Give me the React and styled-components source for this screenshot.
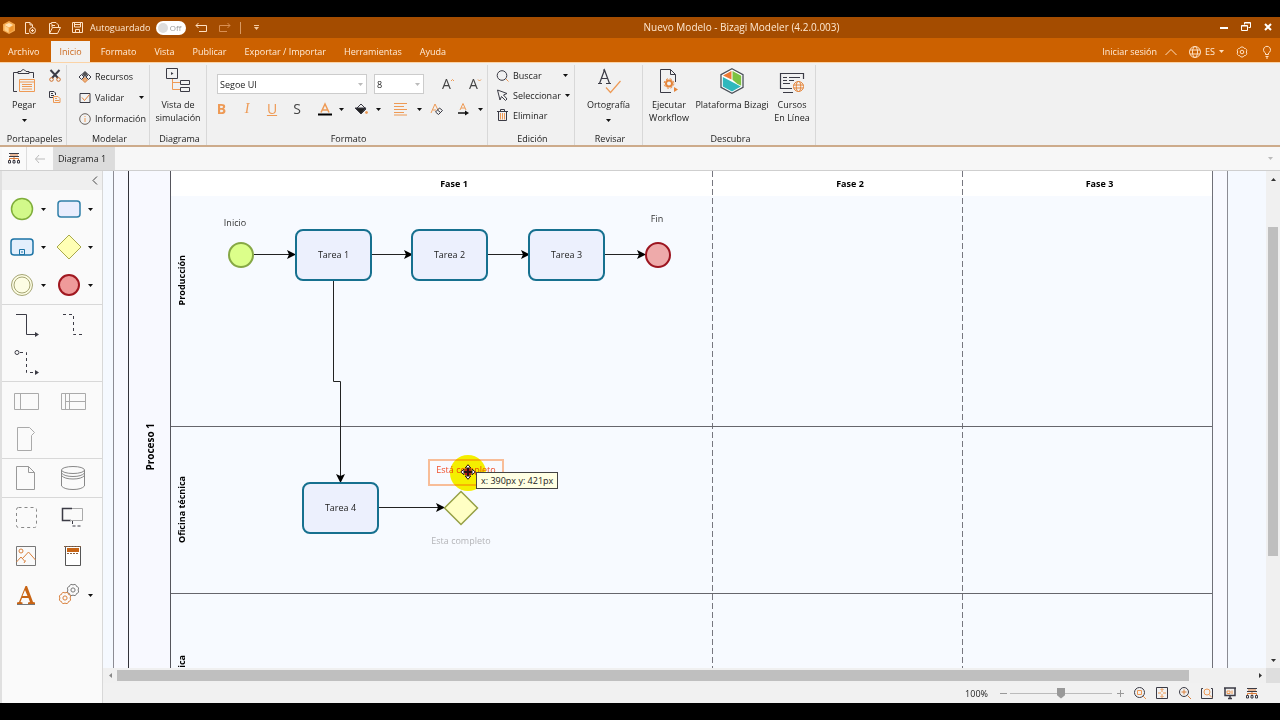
import React from "react";
import styled, { createGlobalStyle, css } from "styled-components";

const GlobalStyle = createGlobalStyle`
  * { box-sizing: border-box; }
  body { margin: 0; background: #000; font-family: "Open Sans", "Noto Sans", sans-serif; font-size: 10px; color: #222; }
  button, select, input { font: inherit; color: inherit; }
  svg { display: block; flex: none; overflow: visible; }
`;

const O = "#ee9a55";
const K = "#3b3b45";

/* ---------- shared ---------- */

const Frame = styled.div`
  height: 100vh;
  min-width: 960px;
  padding: 17px 0;
  display: flex;
  flex-direction: column;
  background: #000;
`;

const IconButton = styled.button`
  border: 0;
  padding: 0;
  background: none;
  width: ${(p) => p.$w || 24}px;
  height: ${(p) => p.$h || 20}px;
  flex: none;
  display: flex;
  align-items: center;
  justify-content: center;
`;

function Icon({ w, h, color = K, sw = 1, children }) {
  return (
    <svg width={w} height={h} viewBox={`0 0 ${w} ${h}`} fill="none" stroke={color} strokeWidth={sw} aria-hidden="true">
      {children}
    </svg>
  );
}

const Caret = ({ color = "#111", w = 5 }) => (
  <svg width={w} height="3" viewBox="0 0 5 3" fill={color} aria-hidden="true">
    <path d="M0 0h5L2.500 3z" />
  </svg>
);

/* ---------- title bar ---------- */

const TitleBar = styled.header`
  height: 21px;
  flex: none;
  display: flex;
  align-items: center;
  background: #a44c00;
  color: #ffe9d2;
`;

const QuickAccess = styled.div`
  display: flex;
  align-items: center;
  width: 270px;
`;

const Autosave = styled.label`
  display: flex;
  align-items: center;
  gap: 6px;
  font-size: 9px;
  white-space: nowrap;
`;

const Toggle = styled.span`
  position: relative;
  display: flex;
  align-items: center;
  justify-content: flex-end;
  width: 30px;
  height: 14px;
  padding-right: 5px;
  border-radius: 7px;
  background: #fff;
  color: #999;
  font-size: 8px;
  input {
    position: absolute;
    left: 2px;
    top: 2px;
    width: 10px;
    height: 10px;
    margin: 0;
    appearance: none;
    border-radius: 50%;
    background: #ddd;
  }
`;

const Divider = styled.span`
  width: 1px;
  height: 12px;
  background: #d99a63;
  margin: 0 6px;
`;

const Title = styled.h1`
  flex: 1;
  margin: 0;
  text-align: center;
  font-size: 10px;
  line-height: 14px;
  padding-bottom: 2px;
  font-weight: 400;
`;

const WindowControls = styled.div`
  display: flex;
  margin-right: 1px;
  padding-bottom: 2px;
`;

/* ---------- menu tabs ---------- */

const MenuRow = styled.nav`
  height: 24px;
  flex: none;
  display: flex;
  align-items: flex-end;
  background: #cc6100;
  color: #ffecd8;
`;

const MenuTab = styled.button`
  border: 0;
  height: 21px;
  padding: 0 ${(p) => (p.$active ? 8 : 9)}px;
  margin: ${(p) => (p.$active ? "0 2px 0 3px" : "0")};
  font-size: 9px;
  white-space: nowrap;
  background: ${(p) => (p.$active ? "#f2f1f0" : "none")};
  color: ${(p) => (p.$active ? "#cc6a20" : "#ffecd8")};
  &:first-child { padding-left: 8px; }
`;

const Account = styled.div`
  margin-left: auto;
  height: 21px;
  display: flex;
  align-items: center;
  font-size: 9px;
  a { color: inherit; text-decoration: none; }
`;

const Language = styled.button`
  display: flex;
  align-items: center;
  gap: 4px;
  border: 0;
  padding: 0;
  margin: 0 6px 0 4px;
  background: none;
`;

/* ---------- ribbon ---------- */

const Ribbon = styled.section`
  height: 85px;
  flex: none;
  display: flex;
  background: #f1f1f1;
  border-top: 1px solid #fbd3a6;
  border-bottom: 2px solid #cdab8b;
`;

const Group = styled.div`
  width: ${(p) => p.$w}px;
  flex: none;
  display: flex;
  flex-direction: column;
  margin: 2px 0 0;
  border-right: 1px solid #d8d8d8;
`;

const GroupBody = styled.div`
  flex: 1;
  min-height: 0;
  display: flex;
  justify-content: ${(p) => p.$justify || "center"};
  padding: ${(p) => p.$pad || "0"};
`;

const GroupName = styled.div`
  height: 16px;
  line-height: 19px;
  padding-left: 3px;
  text-align: center;
  font-size: 9px;
`;

const BigButton = styled.button`
  border: 0;
  padding: 3px 0 0;
  background: none;
  width: ${(p) => p.$w}px;
  display: flex;
  flex-direction: column;
  align-items: center;
  font-size: 9px;
  line-height: 13px;
  white-space: nowrap;
  svg + span { margin-top: 4px; }
  span + svg { margin-top: 8px; }
`;

const Stack = styled.div`
  display: flex;
  flex-direction: column;
`;

const RowButton = styled.button`
  border: 0;
  padding: 0;
  background: none;
  height: ${(p) => p.$h}px;
  width: ${(p) => p.$w}px;
  display: flex;
  align-items: center;
  gap: 4px;
  font-size: 9px;
  white-space: nowrap;
  > svg + svg { margin-left: auto; }
`;

const FontRow = styled.div`
  display: flex;
  align-items: center;
  height: 20px;
`;

const SelectBox = styled.label`
  position: relative;
  display: block;
  width: ${(p) => p.$w}px;
  margin-right: 7px;
  select {
    appearance: none;
    width: 100%;
    height: 20px;
    padding: 0 2px;
    border: 1px solid #ccc;
    border-radius: 0;
    background: #fff;
    font-size: 9px;
    display: block;
  }
  svg { position: absolute; right: 4px; top: 9px; }
`;

const FormatRow = styled.div`
  display: flex;
  align-items: center;
  height: 24px;
  margin-top: 3px;
`;

const Letter = styled.span`
  font-size: 14px;
  line-height: 16px;
  font-family: ${(p) => (p.$serif ? '"Liberation Serif", serif' : '"Open Sans", sans-serif')};
  color: ${(p) => p.$c || "#ee9a55"};
  font-weight: ${(p) => (p.$bold ? 700 : 400)};
  font-style: ${(p) => (p.$italic ? "italic" : "normal")};
  text-decoration: ${(p) => p.$deco || "none"};
`;

/* ---------- document tabs ---------- */

const DocTabs = styled.div`
  height: 24px;
  flex: none;
  display: flex;
  align-items: stretch;
  padding-left: 2px;
  background: #f7f7f7;
  border-bottom: 1px solid #cfcfcf;
`;

const DocButton = styled.button`
  border: 0;
  border-right: 1px solid #ddd;
  background: ${(p) => (p.$active ? "#dcdcdc" : "#fafafa")};
  width: ${(p) => p.$w}px;
  padding: ${(p) => (p.$active ? "0 0 0 4px" : "0")};
  display: flex;
  align-items: center;
  justify-content: ${(p) => (p.$active ? "flex-start" : "center")};
  font-size: 9px;
`;

const DocMenu = styled.button`
  margin-left: auto;
  border: 0;
  padding: 0 6px 0 0;
  background: none;
`;

/* ---------- workspace ---------- */

const Workspace = styled.main`
  flex: 1;
  min-height: 0;
  display: flex;
`;

const Palette = styled.aside`
  width: 103px;
  flex: none;
  background: #fafafa;
  border-left: 2px solid #e0e0e0;
  border-right: 1px solid #d8d8d8;
`;

const PaletteHead = styled.div`
  height: 19px;
  display: flex;
  justify-content: flex-end;
  background: #efefef;
`;

const PaletteSection = styled.div`
  display: grid;
  grid-template-columns: 47px 47px;
  grid-auto-rows: 38px;
  row-gap: ${(p) => p.$gap || 0}px;
  padding-left: 1px;
  & + & { border-top: 1px solid #d8d8d8; }
`;

const Tool = styled.button`
  border: 0;
  padding: 0 4px 0 ${(p) => (p.$menu ? 6 : 10)}px;
  background: none;
  display: flex;
  align-items: center;
  justify-content: flex-start;
  > svg + svg { margin-left: auto; }
`;

const CanvasArea = styled.div`
  flex: 1;
  min-width: 0;
  display: grid;
  grid-template-columns: 1fr 14px;
  grid-template-rows: 1fr 15px 20px;
`;

const Canvas = styled.div`
  position: relative;
  overflow: hidden;
  display: flex;
  background: #f5f9ff;
  padding: 0 38px 0 10px;
`;

const Sheet = styled.div`
  flex: 1;
  display: flex;
  padding: 0 14px;
  border-left: 1px solid #8c8c94;
  border-right: 1px solid #8c8c94;
  background: #f8f9ff;
`;

const Pool = styled.div`
  flex: 1;
  display: flex;
  border-left: 1px solid #33333a;
  border-right: 1px solid #707078;
`;

const Vertical = styled.span`
  writing-mode: vertical-rl;
  transform: rotate(180deg);
  white-space: nowrap;
  color: #000;
  font-weight: 700;
  font-size: ${(p) => p.$size}px;
  line-height: 14px;
`;

const PoolTitle = styled.div`
  width: 42px;
  flex: none;
  display: flex;
  justify-content: center;
  align-items: center;
  padding-top: 54px;
  border-right: 1px solid #55555c;
`;

const PoolBody = styled.div`
  position: relative;
  flex: 1;
  display: flex;
  flex-direction: column;
`;

const Phases = styled.div`
  position: absolute;
  inset: 0;
  display: grid;
  grid-template-columns: 542fr 250fr 249fr;
`;

const Phase = styled.div`
  text-align: center;
  font-size: 9px;
  font-weight: 700;
  color: #000;
  line-height: 25px;
  padding-left: 24px;
  background:
    ${(p) => (p.$last ? "" : "repeating-linear-gradient(to bottom, #77777f 0 6px, transparent 6px 9px) right top / 1px 100% no-repeat,")}
    linear-gradient(#fff, #fff) left top / 100% 25px no-repeat,
    #f7faff;
`;

const Lane = styled.div`
  position: relative;
  flex: ${(p) => (p.$h ? `0 0 ${p.$h}px` : "1")};
  min-height: 0;
  overflow: hidden;
  display: flex;
  align-items: ${(p) => (p.$start ? "flex-start" : "center")};
  padding: ${(p) => p.$pad || "0"};
  border-bottom: ${(p) => (p.$h ? "1px solid #66666c" : "0")};
`;

const at = css`
  position: absolute;
  left: ${(p) => p.$x}px;
  top: ${(p) => p.$y}px;
`;

const Connectors = styled.svg`
  position: absolute;
  left: 0;
  top: 0;
`;

const Task = styled.div`
  ${at}
  width: 77px;
  height: 52px;
  display: flex;
  align-items: center;
  justify-content: center;
  padding-bottom: 2px;
  border: 2px solid #16708f;
  border-radius: 8px;
  background: #ecf0fd;
  font-size: 9px;
`;

const EventNode = styled.div`
  ${at}
  width: 26px;
  height: 26px;
  border-radius: 50%;
  border: 2px solid ${(p) => p.$line};
  background: ${(p) => p.$fill};
`;

const Caption = styled.div`
  ${at}
  width: 76px;
  text-align: center;
  font-size: 9px;
  line-height: 13px;
  white-space: nowrap;
  color: ${(p) => p.$c || "#333"};
`;

const DragGhost = styled(Caption)`
  height: 27px;
  padding-top: 2px;
  border: 2px solid #f8bd98;
  color: #f0502c;
`;

const Highlight = styled.div`
  ${at}
  width: 36px;
  height: 36px;
  border-radius: 50%;
  background: #fcf400;
  mix-blend-mode: multiply;
`;

const Drawing = styled.div`
  ${at}
`;

const Tooltip = styled.div`
  ${at}
  height: 17px;
  padding: 0 4px;
  border: 1px solid #444;
  background: #ffffe3;
  font-size: 9px;
  line-height: 15px;
  white-space: nowrap;
`;

const VScroll = styled.div`
  display: flex;
  flex-direction: column;
  align-items: center;
  padding: 7px 0 6px;
  background: #f0f0f0;
`;

const HScroll = styled.div`
  display: flex;
  align-items: center;
  padding: 0 4px 0 6px;
  background: #f0f0f0;
`;

const ThumbV = styled.div`
  width: 10px;
  height: 68%;
  margin: 46px 0 auto;
  background: #bfbfbf;
`;

const ThumbH = styled.div`
  width: 93%;
  height: 11px;
  margin: 0 auto 0 5px;
  background: #bfbfbf;
`;

const Corner = styled.div`
  background: #dedede;
`;

const StatusBar = styled.footer`
  grid-column: 1 / -1;
  display: flex;
  align-items: center;
  justify-content: flex-end;
  padding-right: 20px;
  background: #f1f1f1;
  font-size: 9px;
`;

const ZoomLabel = styled.label`
  display: flex;
  align-items: center;
  gap: 9px;
`;

const ZoomRange = styled.input`
  appearance: none;
  width: 102px;
  height: 12px;
  margin: 0 3px 0 0;
  background: linear-gradient(#bbb, #bbb) center / 100% 1px no-repeat;
  &::-webkit-slider-thumb {
    appearance: none;
    width: 8px;
    height: 11px;
    background: #999;
    clip-path: polygon(0 0, 100% 0, 100% 70%, 50% 100%, 0 70%);
  }
`;

/* ---------- drawings ---------- */

const Logo = () => (
  <svg width="12" height="13" viewBox="0 0 12 13">
    <path d="M6 0l6 3.2v6.600L6 13 0 9.800V3.200z" fill="#f5a94e" />
    <path d="M1.500 4L6 2l4 2-4 2.500z" fill="#ffe2b4" />
    <path d="M1.500 4.500L5.600 7v4.500L1.500 9.300z" fill="#ffd08a" />
    <path d="M10.500 4.500L6.400 7v4.500l4.100-2.200z" fill="#f0962f" />
  </svg>
);

const HierarchyIcon = () => (
  <svg width="12" height="11" viewBox="0 0 12 11" fill="none" stroke={K}>
    <path d="M1 .5h10M1 3.500h10" />
    <path d="M2 2h8" stroke="#d97b3a" />
    <path d="M6 4v3M1.500 7V5.500h9V7" stroke="#d97b3a" />
    <path d="M.5 7.500h2v2.500h-2zM5 7.500h2v2.500H5zM9.500 7.500h2v2.500h-2z" />
  </svg>
);

const Gear = ({ cx, cy, r, color, n = 8, k = 0.42 }) => {
  const p = (i) => {
    const t = (i / n) * Math.PI * 2;
    return `${(cx + r * Math.cos(t)).toFixed(2)} ${(cy + r * Math.sin(t)).toFixed(2)}`;
  };
  let d = `M${p(0)}`;
  for (let i = 1; i <= n; i++) d += `A${r * k} ${r * k} 0 0 1 ${p(i)}`;
  return (
    <g fill="none" stroke={color}>
      <path d={d + "z"} />
      <circle cx={cx} cy={cy} r={r * 0.42} />
    </g>
  );
};

const Arrow = ({ x, y, down }) => (
  <path d="M0 0L-9-4.500L-7 0L-9 4.500z" fill="#000" stroke="none" transform={`translate(${x} ${y})${down ? " rotate(90)" : ""}`} />
);

/* ---------- sections ---------- */

function TopBar() {
  return (
    <TitleBar>
      <QuickAccess>
        <IconButton $w={18} aria-label="Bizagi"><Logo /></IconButton>
        <IconButton aria-label="Nuevo">
          <Icon w={12} h={12} color="#ffe1c4">
            <path d="M5 11.500H1.500V.5H6l2.500 2.500v2M6 .5V3h2.500" />
            <circle cx="8.500" cy="8.500" r="3" /><path d="M7 8.500h3M8.500 7v3" />
          </Icon>
        </IconButton>
        <IconButton aria-label="Abrir">
          <Icon w={13} h={12} color="#ffe1c4">
            <path d="M1.500 11.500V1.500h2V.5H8L10.500 3v2M1.500 11.500l3-6h8l-3 6zM4 3.500h3M4 5.500V2" />
          </Icon>
        </IconButton>
        <IconButton aria-label="Guardar">
          <Icon w={12} h={12} color="#ffe1c4"><path d="M.5.5h10v10H.5zM2.500.5v4.500h6V.5M3.500 10.500V7.500h4v3M2.500 2.500h6" /></Icon>
        </IconButton>
        <Autosave>
          Autoguardado
          <Toggle><input type="checkbox" />Off</Toggle>
        </Autosave>
        <IconButton $w={30} aria-label="Deshacer">
          <Icon w={12} h={9} color="#ffe1c4"><path d="M3.500 0L1 2.500l2.500 2.500M1 2.500h10.500v6H4" /></Icon>
        </IconButton>
        <IconButton $w={18} aria-label="Rehacer">
          <Icon w={12} h={9} color="#d98f52"><path d="M8.500 0L11 2.500L8.500 5M11 2.500H.5v6H8" /></Icon>
        </IconButton>
        <Divider />
        <IconButton $w={18} aria-label="Personalizar">
          <Icon w={5} h={5} color="#f3cba4"><path d="M0 .5h5" /><path d="M0 2h5L2.500 5z" fill="#f3cba4" stroke="none" /></Icon>
        </IconButton>
      </QuickAccess>
      <Title>Nuevo Modelo - Bizagi Modeler (4.2.0.003)</Title>
      <WindowControls>
        <IconButton $w={22} aria-label="Minimizar"><Icon w={8} h={8} color="#fff" sw={2}><path d="M0 5h8" /></Icon></IconButton>
        <IconButton $w={22} aria-label="Restaurar"><Icon w={10} h={9} color="#fff"><path d="M3.500 2.500v-2h6v5h-2M.5 3.500h6v5h-6zM.5 4h6M3.500 1h6" /></Icon></IconButton>
        <IconButton $w={22} aria-label="Cerrar"><Icon w={8} h={8} color="#fff" sw={2}><path d="M1 1l6 6M7 1L1 7" /></Icon></IconButton>
      </WindowControls>
    </TitleBar>
  );
}

const MENUS = ["Archivo", "Inicio", "Formato", "Vista", "Publicar", "Exportar / Importar", "Herramientas", "Ayuda"];

function Menu() {
  return (
    <MenuRow>
      {MENUS.map((m) => <MenuTab key={m} $active={m === "Inicio"}>{m}</MenuTab>)}
      <Account>
        <a href="#sesion">Iniciar sesión</a>
        <IconButton $w={28} aria-label="Contraer"><Icon w={12} h={6} color="#ffdfc0"><path d="M.5 6L6 .5 11.500 6" /></Icon></IconButton>
        <Language>
          <Icon w={12} h={12} color="#ffe1c4"><circle cx="6" cy="6" r="5.500" /><ellipse cx="6" cy="6" rx="2.500" ry="5.500" /><path d="M1 4h10M1 8h10" /></Icon>
          ES <Caret color="#ffdfc0" />
        </Language>
        <IconButton $w={24} aria-label="Opciones">
          <svg width="12" height="12"><Gear cx={6} cy={6} r={4.3} n={6} k={0.55} color="#ffe1c4" /></svg>
        </IconButton>
        <IconButton $w={26} aria-label="Sugerencias"><Icon w={8} h={12} color="#ffe1c4"><path d="M2.500 8.500V7A3.500 3.500 0 1 1 5.500 7v1.500zM2.500 10.500h3M3 12h2" /></Icon></IconButton>
      </Account>
    </MenuRow>
  );
}

function RibbonBar() {
  return (
    <Ribbon>
      <Group $w={67}>
        <GroupBody $justify="flex-start" $pad="0 0 0 4px">
          <BigButton $w={40}>
            <Icon w={24} h={26}>
              <path d="M5 23.500H1.500V4.500H6M17 4.500h4.500V10M6 5.500v-2h3q2-4 5 0h3v2z" />
              <path d="M7.500 11.500h15v12h-15zM7.500 14h15M10 16.500h10M10 18.500h10M10 21h10" stroke={O} />
            </Icon>
            <span>Pegar</span>
            <Caret />
          </BigButton>
          <Stack>
            <IconButton $w={22} $h={22} aria-label="Cortar">
              <Icon w={12} h={12}><path d="M1.500 0L9 8M10.500 0L3 8" strokeWidth="2" /><circle cx="2.500" cy="9.500" r="1.800" stroke="#cf6f2a" /><circle cx="9.500" cy="9.500" r="1.800" stroke="#cf6f2a" /></Icon>
            </IconButton>
            <IconButton $w={22} $h={20} aria-label="Copiar">
              <Icon w={12} h={12}><path d="M4 6.500H.5v-6h4.500l1.500 1.500V4M2 2.500h2M2 4.500h3" /><path d="M4.500 5.500h4.500l2 2v4h-6.500zM6 7.500h2M6 9.500h4" stroke={O} /></Icon>
            </IconButton>
          </Stack>
        </GroupBody>
        <GroupName>Portapapeles</GroupName>
      </Group>

      <Group $w={83}>
        <GroupBody $justify="flex-start" $pad="1px 0 0 12px">
          <Stack>
            <RowButton $h={21} $w={66}>
              <Icon w={12} h={12}><path d="M6 .5l2.500 2.500L6 5.500 3.500 3z" fill="#555" /><path d="M2.500 3.500L5 6 2.500 8.500 0 6zM9.500 3.500L12 6 9.500 8.500 7 6z" /><path d="M6 6.500l2.500 2.500L6 11.500 3.500 9z" stroke="#d9803c" fill="#efb27e" /></Icon>
              Recursos
            </RowButton>
            <RowButton $h={21} $w={65}>
              <Icon w={12} h={12}><path d="M1 1.500h10v9H1z" /><path d="M3 5.500l2.500 3 5-6" stroke="#e5853a" /></Icon>
              Validar
              <Caret />
            </RowButton>
            <RowButton $h={21} $w={68}>
              <Icon w={12} h={12} color="#6b6460"><circle cx="6" cy="6" r="5.300" /><path d="M6 5v4M6 3v1" stroke={O} /></Icon>
              Información
            </RowButton>
          </Stack>
        </GroupBody>
        <GroupName>Modelar</GroupName>
      </Group>

      <Group $w={57}>
        <GroupBody>
          <BigButton $w={55}>
            <Icon w={24} h={26}>
              <path d="M.5.5h11v10H.5z" /><path d="M5 4v3l2.500-1.500z" fill={K} stroke="none" />
              <path d="M6.500 11v10.500H14M6.500 14.500H14" stroke={O} />
              <path d="M14.500 12.500h9v4h-9zM14.500 19.500h9v4h-9z" />
            </Icon>
            <span>Vista de<br />simulación</span>
          </BigButton>
        </GroupBody>
        <GroupName>Diagrama</GroupName>
      </Group>

      <Group $w={281}>
        <GroupBody $justify="flex-start" $pad="9px 0 0 10px">
          <Stack>
            <FontRow>
              <SelectBox $w={150}>
                <select aria-label="Fuente"><option>Segoe UI</option></select>
                <Caret color="#bbb" />
              </SelectBox>
              <SelectBox $w={50}>
                <select aria-label="Tamaño"><option>8</option></select>
                <Caret color="#bbb" />
              </SelectBox>
              <IconButton $w={34} aria-label="Aumentar fuente">
                <Letter $c="#444">A</Letter><Icon w={3} h={10} color={O}><path d="M0 2l1.500-1.500L3 2" /></Icon>
              </IconButton>
              <IconButton $w={20} aria-label="Reducir fuente">
                <Letter $c="#444">A</Letter><Icon w={3} h={10} color={O}><path d="M0 .5l1.500 1.500L3 .5" /></Icon>
              </IconButton>
            </FontRow>
            <FormatRow>
              <IconButton $w={9} aria-label="Negrita"><Letter $bold>B</Letter></IconButton>
              <IconButton $w={42} aria-label="Cursiva"><Letter $serif $italic>I</Letter></IconButton>
              <IconButton $w={8} aria-label="Subrayado"><Letter $deco="underline">U</Letter></IconButton>
              <IconButton $w={42} aria-label="Tachado"><Letter $c="#444">S</Letter></IconButton>
              <IconButton $w={14} aria-label="Color de fuente"><Icon w={14} h={13}><path d="M3 9.500L7 1l4 8.500M4.500 7h5" stroke={O} strokeWidth="1.500" /><path d="M0 11.500h14" stroke="#000" strokeWidth="2" /></Icon></IconButton>
              <IconButton $w={18} aria-label="Más colores"><Caret /></IconButton>
              <IconButton $w={22} aria-label="Relleno"><Icon w={13} h={12}><path d="M6 1l5 5-5 5-5-5z" /><path d="M0 5h11L6 11z" fill="#222" /><circle cx="11.500" cy="9.500" r="1" fill={O} stroke={O} /></Icon></IconButton>
              <IconButton $w={12} aria-label="Más rellenos"><Caret /></IconButton>
              <IconButton $w={32} aria-label="Alineación"><Icon w={13} h={12} color={O}><path d="M0 .5h13M0 3.500h10M0 6.500h13M0 9.500h10M0 12h13" /></Icon></IconButton>
              <IconButton $w={6} aria-label="Más alineaciones"><Caret /></IconButton>
              <IconButton $w={30} aria-label="Borrar formato"><Icon w={12} h={12}><path d="M0 10L4 1l3 6M2 7h3" stroke={O} /><path d="M4.500 9l4-4 3 2.500-4 4zM6.500 7l3 2.500" /></Icon></IconButton>
              <IconButton $w={22} aria-label="Orientación"><Icon w={11} h={12}><path d="M2 7l3-6.500L8 7M3 5h4" stroke={O} /><path d="M0 10h8" stroke="#111" strokeWidth="1.500" /><path d="M7 7.500l4 2.500-4 2.500z" fill="#111" stroke="none" /></Icon></IconButton>
              <IconButton $w={12} aria-label="Más orientaciones"><Caret /></IconButton>
            </FormatRow>
          </Stack>
        </GroupBody>
        <GroupName>Formato</GroupName>
      </Group>

      <Group $w={87}>
        <GroupBody $justify="flex-start" $pad="1px 0 0 8px">
          <Stack>
            <RowButton $h={19} $w={72}>
              <Icon w={13} h={12}><circle cx="6" cy="5.500" r="4.800" /><path d="M10 9l2.500 2.500" stroke={O} /></Icon>
              Buscar <Caret />
            </RowButton>
            <RowButton $h={20} $w={72}>
              <Icon w={13} h={12}><path d="M1.500 1l9.500 3.500-3.500 1.500 3.500 4-1.500 1.500-4-4L4 11z" /></Icon>
              Seleccionar <Caret />
            </RowButton>
            <RowButton $h={20} $w={72}>
              <Icon w={13} h={12}><path d="M1 2.500h11M4.500 2V.5h4V2M2.500 3v8.500h8V3" /><path d="M4.500 4v6.500M6.500 4v6.500M8.500 4v6.500" stroke={O} /></Icon>
              Eliminar
            </RowButton>
          </Stack>
        </GroupBody>
        <GroupName>Edición</GroupName>
      </Group>

      <Group $w={68}>
        <GroupBody>
          <BigButton $w={60}>
            <Icon w={24} h={26}>
              <path d="M1 15.500h4M9 15.500h5M2.500 15.500L7.500 2l5 13.500M4.500 10.500h6.500M6 2h2" strokeWidth="1.200" />
              <path d="M9 19.500l4.500 5L23.500 13" stroke={O} strokeWidth="1.200" />
            </Icon>
            <span>Ortografía</span>
            <Caret />
          </BigButton>
        </GroupBody>
        <GroupName>Revisar</GroupName>
      </Group>

      <Group $w={173}>
        <GroupBody $justify="flex-start" $pad="0 0 0 4px">
          <BigButton $w={44}>
            <Icon w={20} h={26}>
              <path d="M12 24.500H1.500V1.500h10l5 5V14M11.500 1.500v5h5" />
              <circle cx="10" cy="15.500" r="3" stroke="#e5853a" strokeWidth="2" /><circle cx="10" cy="15.500" r="4.800" stroke="#e5853a" strokeDasharray="2 1.800" />
              <path d="M15 19v5l4-2.500z" fill="#e5853a" stroke="none" />
            </Icon>
            <span>Ejecutar<br />Workflow</span>
          </BigButton>
          <BigButton $w={82}>
            <svg width="24" height="26" viewBox="0 0 24 26">
              <path d="M12 .7l11 6v12.600l-11 6-11-6V6.700z" fill="#fff" stroke="#4a5058" strokeWidth="1.300" />
              <path d="M11.500 3v8.500L3 7.500z" fill="#ee7a35" />
              <path d="M12.500 3l8.700 4.700v10l-4-2-4.700-4z" fill="#7dc242" />
              <path d="M2.800 9l18 9.500L12 23.500l-9.200-5z" fill="#2fb8bd" />
            </svg>
            <span>Plataforma Bizagi</span>
          </BigButton>
          <BigButton $w={38}>
            <Icon w={24} h={26}>
              <path d="M12 20.500H.5v-15h23V11M3 24.500h10" strokeWidth="1.200" /><path d="M3 9.500h4M9 9.500h11M3 12.500h4M9 12.500h5M3 15.500h7" />
              <g stroke="#e5853a"><circle cx="18.500" cy="18.500" r="5" /><ellipse cx="18.500" cy="18.500" rx="2.200" ry="5" /><path d="M13.500 17h10M13.500 20h10" /></g>
            </Icon>
            <span>Cursos<br />En Línea</span>
          </BigButton>
        </GroupBody>
        <GroupName>Descubra</GroupName>
      </Group>
    </Ribbon>
  );
}

function ToolPalette() {
  return (
    <Palette>
      <PaletteHead><IconButton $w={14} $h={19} aria-label="Contraer paleta"><Icon w={6} h={9} color="#444"><path d="M5 .5l-4 4 4 4" /></Icon></IconButton></PaletteHead>
      <PaletteSection>
        <Tool $menu aria-label="Evento de inicio"><Icon w={26} h={26} color="#7fae3a"><circle cx="13" cy="13" r="10.500" fill="#d2f98a" strokeWidth="1.500" /></Icon><Caret /></Tool>
        <Tool $menu aria-label="Tarea"><Icon w={26} h={26} color="#2f7fa8" sw={1.5}><rect x="2" y="5" width="22" height="16" rx="3" fill="#e9edfd" /></Icon><Caret /></Tool>
        <Tool $menu aria-label="Subproceso"><Icon w={26} h={26} color="#1b73a5" sw={1.5}><rect x="2" y="5" width="22" height="16" rx="3" fill="#e3effc" /><path d="M10.500 15.500h5v5h-5zM12 18h2" strokeWidth="1" /></Icon><Caret /></Tool>
        <Tool $menu aria-label="Compuerta"><Icon w={26} h={26} color="#a9a94c"><path d="M13 1l12 12-12 12L1 13z" fill="#ffffb5" /></Icon><Caret /></Tool>
        <Tool $menu aria-label="Evento intermedio"><Icon w={26} h={26} color="#a5a574"><circle cx="13" cy="13" r="10.500" fill="#fdfde4" /><circle cx="13" cy="13" r="8" /></Icon><Caret /></Tool>
        <Tool $menu aria-label="Evento de fin"><Icon w={26} h={26} color="#a01820" sw={2}><circle cx="13" cy="13" r="10" fill="#ef9a9a" /></Icon><Caret /></Tool>
      </PaletteSection>
      <PaletteSection>
        <Tool aria-label="Flujo de secuencia"><Icon w={28} h={26}><path d="M3 3.500h10.500v20H24" /><path d="M22 21l4 2.500-4 2.500z" fill={K} stroke="none" /></Icon></Tool>
        <Tool aria-label="Asociación"><Icon w={28} h={26}><path d="M3 3.500h10.500v20H25" strokeDasharray="3 3" /></Icon></Tool>
        <Tool aria-label="Flujo de mensaje"><Icon w={28} h={26}><circle cx="4" cy="3.500" r="2" /><path d="M7 3.500h6.500v20H23" strokeDasharray="3 3" /><path d="M22 21l4 2.500-4 2.500z" fill={K} stroke="none" /></Icon></Tool>
      </PaletteSection>
      <PaletteSection>
        <Tool aria-label="Proceso"><Icon w={26} h={20} color="#aaa"><path d="M1.500 2.500h24v16h-24zM7.500 2.500v16" /></Icon></Tool>
        <Tool aria-label="Carril"><Icon w={26} h={20} color="#aaa"><path d="M1.500 2.500h24v16h-24zM5.500 2.500v16M9.500 2.500v16M5.500 10.500h20" /></Icon></Tool>
        <Tool aria-label="Fase"><Icon w={26} h={26} color="#aaa"><path d="M4.500 1.500h12l5 5-3 3v15h-14z" /></Icon></Tool>
      </PaletteSection>
      <PaletteSection>
        <Tool aria-label="Objeto de datos"><Icon w={26} h={26} color="#999"><path d="M3.500 1.500h12l6 6v17h-18zM15.500 1.500v6h6" /></Icon></Tool>
        <Tool aria-label="Depósito de datos"><Icon w={26} h={26} color="#888"><ellipse cx="13" cy="5" rx="11.500" ry="3.500" /><path d="M1.500 5v16q3 3.500 11.500 3.500t11.500-3.500V5M1.500 8q3 3.500 11.500 3.500T24.500 8M1.500 10.500q3 3.500 11.500 3.500t11.500-3.500" /></Icon></Tool>
      </PaletteSection>
      <PaletteSection $gap={1}>
        <Tool aria-label="Grupo"><Icon w={26} h={26} color="#888"><rect x="3.500" y="3.500" width="20" height="20" rx="2" strokeDasharray="3 3" /></Icon></Tool>
        <Tool aria-label="Anotación"><Icon w={26} h={26}><path d="M11 16.500H2.500v-12H12" strokeWidth="1.500" /><path d="M12 4.500h10.500v12H10" stroke="#aaa" /><path d="M12.500 17v5H21" strokeDasharray="3 2" /></Icon></Tool>
        <Tool aria-label="Imagen"><Icon w={26} h={26} color="#777"><path d="M3.500 3.500h19v19h-19z" /><path d="M3.500 19l4.500-5 4 4.500M9 16l6.500-7 7 8M11 20l1.500-2.500" stroke="#d9803c" /><circle cx="8" cy="8" r="2" stroke="#d9803c" /></Icon></Tool>
        <Tool aria-label="Encabezado"><Icon w={26} h={26} color="#555"><path d="M5.500 3.500h15v19h-15z" fill="#fff" /><path d="M7 5h12v4H7z" fill="#c86414" stroke="none" /><path d="M4 3.500h18M7 10.500h12" strokeDasharray="2 1" stroke="#8a6244" /></Icon></Tool>
        <Tool aria-label="Texto con formato"><Icon w={26} h={26}><path d="M4 22v-1.500l2-.5L12.500 4h1.500L20 20l2 .5V22h-7v-1.500l2-.5-1.500-4H9L7.500 20l2 .5V22zM9.500 14h5L12 8z" fill="#c86414" stroke="none" /><path d="M4 22.500h18" stroke="#777" /></Icon></Tool>
        <Tool $menu aria-label="Artefactos"><svg width="26" height="26"><Gear cx={17} cy={8} r={5} color="#777" /><Gear cx={9} cy={16} r={5} color="#d9803c" /></svg><Caret /></Tool>
      </PaletteSection>
    </Palette>
  );
}

function Diagram() {
  return (
    <Canvas>
      <Sheet>
        <Pool>
          <PoolTitle><Vertical $size={10}>Proceso 1</Vertical></PoolTitle>
          <PoolBody>
            <Phases>
              <Phase>Fase 1</Phase>
              <Phase>Fase 2</Phase>
              <Phase $last>Fase 3</Phase>
            </Phases>
            <Lane $h={256} $pad="0 0 37px 4px"><Vertical $size={9}>Producción</Vertical></Lane>
            <Lane $h={167} $pad="0 0 0 4px"><Vertical $size={9}>Oficina técnica</Vertical></Lane>
            <Lane $start $pad="61px 0 0 4px"><Vertical $size={9}>ica</Vertical></Lane>
          </PoolBody>
        </Pool>
      </Sheet>

      <Connectors width="600" height="400" fill="none" stroke="#222">
        <path d="M151 83.500h40M268 83.500h41M385 83.500h41M502 83.500h41M230.500 109v101.500h7V310M275 336.500h64" />
        <Arrow x={193} y={83.5} /><Arrow x={310} y={83.5} /><Arrow x={427} y={83.5} /><Arrow x={543} y={83.5} />
        <Arrow x={237.5} y={312} down /><Arrow x={342} y={336.5} />
      </Connectors>

      <Caption $x={94} $y={45}>Inicio</Caption>
      <EventNode $x={125} $y={71} $line="#86a845" $fill="#dcff8a" />
      <Task $x={192} $y={58}>Tarea 1</Task>
      <Task $x={308} $y={58}>Tarea 2</Task>
      <Task $x={425} $y={58}>Tarea 3</Task>
      <Caption $x={516} $y={41}>Fin</Caption>
      <EventNode $x={542} $y={71} $line="#9c1520" $fill="#eeaaaa" />
      <Task $x={199} $y={311}>Tarea 4</Task>
      <Drawing $x={340} $y={319}>
        <Icon w={36} h={36} color="#96a046" sw={1.5}><path d="M18 1.500L34.500 18 18 34.500 1.500 18z" fill="#ffffc4" /></Icon>
      </Drawing>
      <Caption $x={320} $y={363} $c="#b4b4b8">Esta completo</Caption>
      <DragGhost $x={325} $y={288}>Está completo</DragGhost>
      <Highlight $x={347} $y={284} />
      <Drawing $x={357} $y={293}>
        <Icon w={16} h={16} color="#2a1010">
          <path d="M5 5h6v6H5z" fill="#c01c1c" stroke="none" />
          <path d="M8 4v8M4 8h8" strokeWidth="2" />
          <path d="M8 .7L10.800 4H5.200zM8 15.300L10.800 12H5.200zM.7 8L4 5.200v5.600zM15.300 8L12 5.200v5.600z" fill="#fff" />
        </Icon>
      </Drawing>
      <Tooltip $x={373} $y={301}>x: 390px y: 421px</Tooltip>
    </Canvas>
  );
}

function Status() {
  return (
    <StatusBar>
      <ZoomLabel htmlFor="zoom">100%</ZoomLabel>
      <IconButton $w={22} aria-label="Alejar"><Icon w={7} h={7} color="#999"><path d="M4 3.500h7" /></Icon></IconButton>
      <ZoomRange id="zoom" type="range" min="0" max="200" defaultValue="100" />
      <IconButton $w={10} aria-label="Acercar"><Icon w={7} h={7} color="#999"><path d="M0 3.500h7M3.500 0v7" /></Icon></IconButton>
      <IconButton $w={29} aria-label="Zoom al 100%"><Icon w={12} h={12}><circle cx="5.500" cy="5.500" r="5" /><path d="M3.500 3.500h4v4h-4zM9 9l3 3" stroke={O} /></Icon></IconButton>
      <IconButton $w={16} aria-label="Ajustar"><Icon w={12} h={12}><path d="M.5.5h11v11H.5z" /><path d="M6 2v3M6 7v3M2 6h3M7 6h3M4.500 3L6 1.500 7.500 3M4.500 9L6 10.500 7.500 9" stroke={O} /></Icon></IconButton>
      <IconButton $w={29} aria-label="Ampliar"><Icon w={12} h={12}><circle cx="5" cy="5" r="4.500" /><path d="M5 2.500v5M2.500 5h5M8.500 8.500L12 12" stroke="#d9803c" /></Icon></IconButton>
      <IconButton $w={16} aria-label="Zoom a selección"><Icon w={12} h={11}><path d="M2 .5H.5v10h11V.5H10" /><circle cx="6" cy="4" r="3" stroke={O} /><path d="M8 6.500l3 3" stroke={O} /></Icon></IconButton>
      <IconButton $w={29} aria-label="Presentación"><Icon w={12} h={12}><path d="M0 1h12M1 1v7.500h10V1M6 9v2M4 11.500h4" strokeWidth="1.500" /><path d="M3 4h3v2.500H3zM8 3.500V7" stroke={O} /></Icon></IconButton>
      <IconButton $w={16} aria-label="Jerarquía"><HierarchyIcon /></IconButton>
    </StatusBar>
  );
}

export default function App() {
  return (
    <>
      <GlobalStyle />
      <Frame>
        <TopBar />
        <Menu />
        <RibbonBar />
        <DocTabs>
          <DocButton $w={25} aria-label="Diagramas"><HierarchyIcon /></DocButton>
          <DocButton $w={27} aria-label="Atrás"><Icon w={10} h={8} color="#bbb"><path d="M4 0L.5 4 4 8M.5 4H10" /></Icon></DocButton>
          <DocButton $w={61} $active>Diagrama 1</DocButton>
          <DocMenu aria-label="Lista de diagramas"><Caret color="#bbb" w={7} /></DocMenu>
        </DocTabs>
        <Workspace>
          <ToolPalette />
          <CanvasArea>
            <Diagram />
            <VScroll>
              <svg width="5" height="3"><path d="M0 3h5L2.500 0z" fill="#333" /></svg>
              <ThumbV />
              <Caret color="#333" />
            </VScroll>
            <HScroll>
              <svg width="3" height="5"><path d="M3 0v5L0 2.500z" fill="#888" /></svg>
              <ThumbH />
              <svg width="3" height="5"><path d="M0 0v5l3-2.500z" fill="#333" /></svg>
            </HScroll>
            <Corner />
            <Status />
          </CanvasArea>
        </Workspace>
      </Frame>
    </>
  );
}
